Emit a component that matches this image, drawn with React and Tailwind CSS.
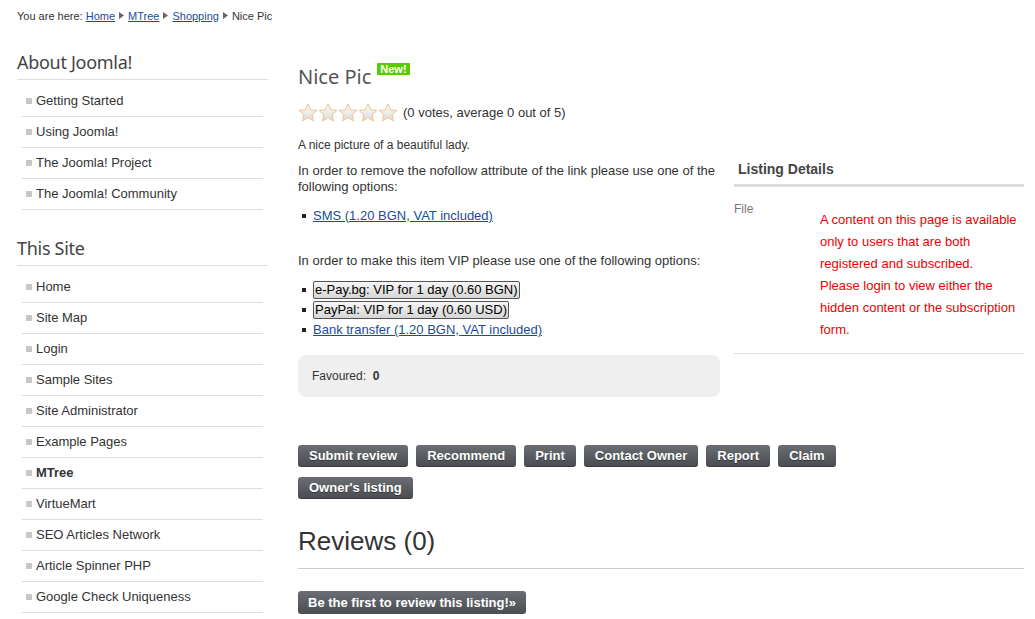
import React from 'react';

const aboutLinks = ['Getting Started', 'Using Joomla!', 'The Joomla! Project', 'The Joomla! Community'];
const siteLinks = [
  'Home',
  'Site Map',
  'Login',
  'Sample Sites',
  'Site Administrator',
  'Example Pages',
  'MTree',
  'VirtueMart',
  'SEO Articles Network',
  'Article Spinner PHP',
  'Google Check Uniqueness',
];

const Arrow = () => (
  <svg width="5" height="7" viewBox="0 0 5 7" className="mx-[4px] inline-block">
    <path d="M0 0 L5 3.5 L0 7 Z" fill="#666" />
  </svg>
);

const Star = () => (
  <svg width="20" height="19" viewBox="0 0 20 19">
    <defs>
      <linearGradient id="sg" x1="0" y1="0" x2="0" y2="1">
        <stop offset="0" stopColor="#ffffff" />
        <stop offset="1" stopColor="#d8d8d8" />
      </linearGradient>
    </defs>
    <path
      d="M10 1 L12.6 6.9 L19 7.4 L14.1 11.6 L15.6 18 L10 14.6 L4.4 18 L5.9 11.6 L1 7.4 L7.4 6.9 Z"
      fill="url(#sg)"
      stroke="#f2c38c"
      strokeWidth="1"
      strokeLinejoin="round"
    />
  </svg>
);

const SideMenu = ({ title, items }) => (
  <div className="mb-[26px]">
    <h3 className="text-[18px] leading-[24px] text-[#444] font-['Noto_Sans',sans-serif] pb-[5px] border-b border-[#ddd] tracking-[-0.3px]">
      {title}
    </h3>
    <ul className="px-[5px] mt-[6px]">
      {items.map((item) => (
        <li key={item} className="flex items-center h-[31px] border-b border-[#ddd] pl-[4px]">
          <span className="w-[6px] h-[6px] bg-[#c8c8c8] mr-[4px]" />
          <span className={`text-[13px] text-[#333] ${item === 'MTree' ? 'font-bold' : ''}`}>{item}</span>
        </li>
      ))}
    </ul>
  </div>
);

const DarkButton = ({ children }) => (
  <button className="h-[22px] px-[11px] rounded-[3px] bg-gradient-to-b from-[#6b6e73] to-[#4a4d52] text-white text-[13px] font-bold leading-[22px] border-b border-[#3a3c40] [text-shadow:0_1px_0_rgba(0,0,0,0.4)]">
    {children}
  </button>
);

const GreyButton = ({ children }) => (
  <button className="h-[18px] px-[1px] rounded-[2px] border border-[#555] bg-gradient-to-b from-[#f6f6f6] to-[#d6d6d6] text-[13px] leading-[16px] text-black">
    {children}
  </button>
);

export default function App() {
  return (
    <div className="w-[1035px] h-[619px] overflow-hidden bg-white font-['Liberation_Sans',Arial,sans-serif] text-[#333] pl-[17px]">
      {/* Breadcrumb */}
      <div className="h-[30px] pt-[1px] text-[11px] leading-[14px] text-[#333] flex items-center">
        <span>You are here:&nbsp;</span>
        <a className="text-[#1a4d94] underline">Home</a>
        <Arrow />
        <a className="text-[#1a4d94] underline">MTree</a>
        <Arrow />
        <a className="text-[#1a4d94] underline">Shopping</a>
        <Arrow />
        <span>Nice Pic</span>
      </div>

      <div className="flex mt-[20px]">
        {/* Sidebar */}
        <div className="w-[251px] shrink-0">
          <SideMenu title="About Joomla!" items={aboutLinks} />
          <SideMenu title="This Site" items={siteLinks} />
        </div>

        {/* Main */}
        <div className="ml-[30px] flex-1 pr-[11px]">
          <div className="flex">
            <div className="w-[422px] shrink-0">
              <div className="flex items-start mt-[15px]">
                <h1 className="text-[20px] leading-[24px] text-[#555] font-['Noto_Sans',sans-serif]">Nice Pic</h1>
                <span className="ml-[6px] mt-[-2px] bg-[#55cc00] text-white text-[11px] font-bold leading-[12px] px-[3px] rounded-[1px]">
                  New!
                </span>
              </div>
              <div className="flex items-center mt-[14px]">
                <div className="flex gap-0">
                  <Star />
                  <Star />
                  <Star />
                  <Star />
                  <Star />
                </div>
                <span className="ml-[5px] text-[13px] text-[#333]">(0 votes, average 0 out of 5)</span>
              </div>
              <p className="text-[12px] leading-[16px] mt-[14px]">A nice picture of a beautiful lady.</p>
              <p className="text-[13px] leading-[16px] mt-[10px]">
                In order to remove the nofollow attribute of the link please use one of the following options:
              </p>
              <ul className="mt-[13px] text-[13px] leading-[16px]">
                <li className="flex items-center">
                  <span className="w-[4px] h-[4px] bg-[#222] ml-[4px] mr-[7px]" />
                  <a className="text-[#1a4d94] underline">SMS (1.20 BGN, VAT included)</a>
                </li>
              </ul>
              <p className="text-[13px] leading-[16px] mt-[29px]">
                In order to make this item VIP please use one of the following options:
              </p>
              <ul className="mt-[11px] text-[13px] leading-[16px]">
                <li className="flex items-center h-[20px]">
                  <span className="w-[4px] h-[4px] bg-[#222] ml-[4px] mr-[7px]" />
                  <GreyButton>e-Pay.bg: VIP for 1 day (0.60 BGN)</GreyButton>
                </li>
                <li className="flex items-center h-[20px]">
                  <span className="w-[4px] h-[4px] bg-[#222] ml-[4px] mr-[7px]" />
                  <GreyButton>PayPal: VIP for 1 day (0.60 USD)</GreyButton>
                </li>
                <li className="flex items-center h-[21px]">
                  <span className="w-[4px] h-[4px] bg-[#222] ml-[4px] mr-[7px]" />
                  <a className="text-[#1a4d94] underline">Bank transfer (1.20 BGN, VAT included)</a>
                </li>
              </ul>
              <div className="mt-[14px] h-[42px] rounded-[8px] bg-[#efefef] flex items-center pl-[14px] text-[12px]">
                Favoured:&nbsp;&nbsp;<b>0</b>
              </div>
            </div>

            {/* Listing details */}
            <div className="ml-[14px] flex-1 mt-[110px]">
              <h3 className="text-[14px] font-bold text-[#444] leading-[18px] pl-[4px] pb-[6px] border-b-[3px] border-[#ddd]">
                Listing Details
              </h3>
              <div className="flex pt-[14px] pb-[12px] border-b border-[#ddd]">
                <span className="w-[86px] shrink-0 text-[12px] text-[#777] leading-[16px]">File</span>
                <p className="mt-[8px] text-[13px] leading-[22px] text-[#ee0000] w-[204px]">
                  A content on this page is available only to users that are both registered and subscribed.
                  <br />
                  Please login to view either the hidden content or the subscription form.
                </p>
              </div>
            </div>
          </div>

          {/* Action buttons */}
          <div className="flex flex-wrap gap-x-[8px] gap-y-[10px] mt-[48px] w-[540px]">
            <DarkButton>Submit review</DarkButton>
            <DarkButton>Recommend</DarkButton>
            <DarkButton>Print</DarkButton>
            <DarkButton>Contact Owner</DarkButton>
            <DarkButton>Report</DarkButton>
            <DarkButton>Claim</DarkButton>
            <DarkButton>Owner&apos;s listing</DarkButton>
          </div>

          <h2 className="mt-[24px] text-[26px] leading-[36px] text-[#333] pb-[9px] border-b border-[#ccc]">
            Reviews (0)
          </h2>
          <div className="mt-[21px]">
            <button className="h-[23px] px-[10px] rounded-[3px] bg-gradient-to-b from-[#6b6e73] to-[#4a4d52] text-white text-[13px] leading-[23px] font-semibold">
              Be the first to review this listing!»
            </button>
          </div>
        </div>
      </div>
    </div>
  );
}
